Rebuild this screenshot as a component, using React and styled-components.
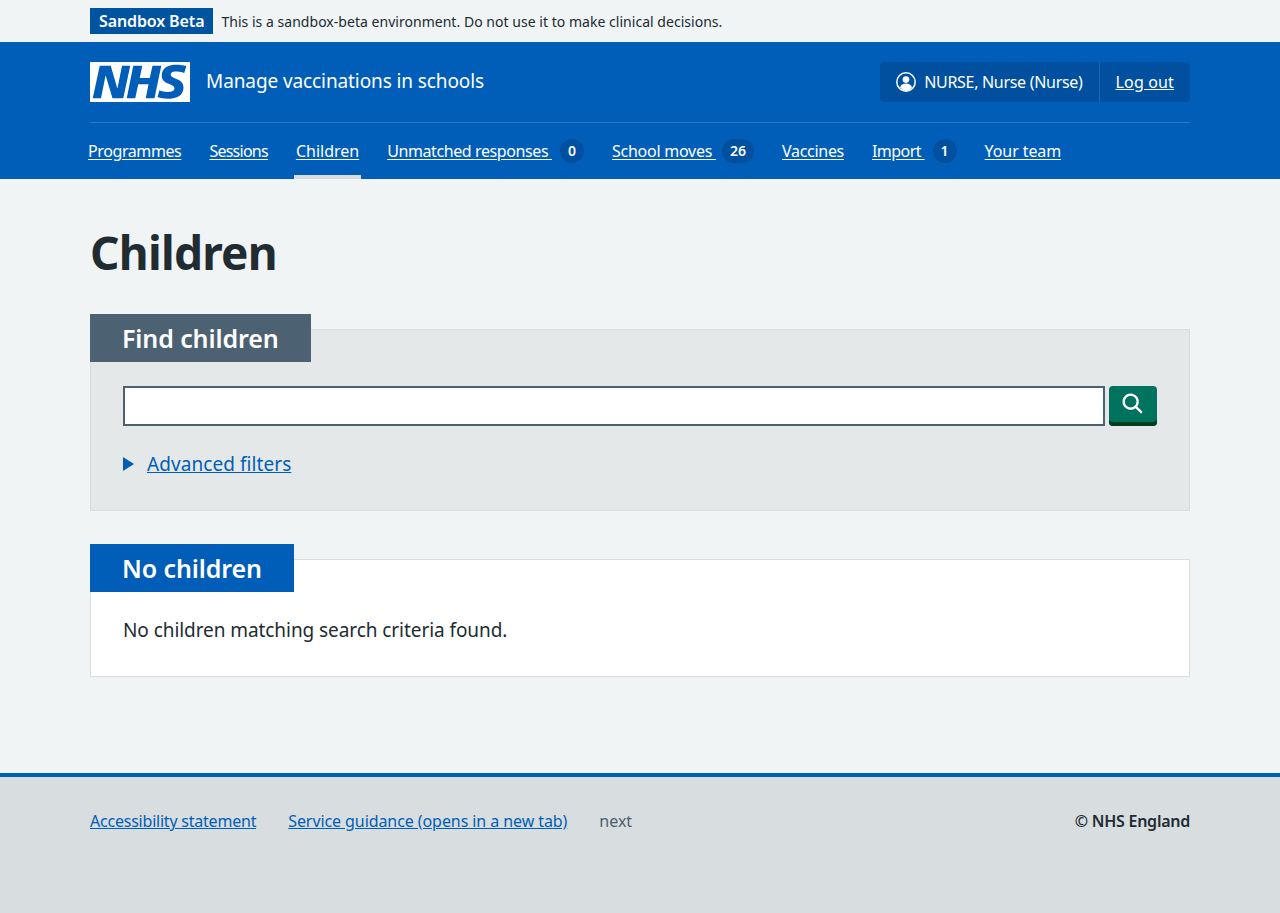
import React from 'react';
import styled, { createGlobalStyle } from 'styled-components';

const GlobalStyle = createGlobalStyle`
  html, body {
    margin: 0;
    padding: 0;
    background: #f0f4f5;
    color: #212b32;
    font-family: "Noto Sans", "Open Sans", Arial, sans-serif;
  }
  * { box-sizing: border-box; }
`;

const Page = styled.div`
  min-height: 913px;
  display: flex;
  flex-direction: column;
`;

const Width = styled.div`
  width: 1100px;
  margin: 0 auto;
`;

const EnvBar = styled.div`
  height: 42px;
  padding-top: 8px;
`;

const EnvRow = styled.div`
  display: flex;
  align-items: flex-start;
  gap: 8px;
`;

const EnvTag = styled.strong`
  background: #00539f;
  color: #fff;
  font-size: 16px;
  font-weight: 600;
  line-height: 26px;
  height: 26px;
  padding: 0 9px;
  letter-spacing: -0.12px;
`;

const EnvText = styled.span`
  font-size: 14px;
  line-height: 26px;
  padding-top: 1px;
  letter-spacing: 0.03px;
`;

const Header = styled.header`
  background: #005eb8;
  height: 137px;
  color: #fff;
`;

const HeaderTop = styled.div`
  display: flex;
  justify-content: space-between;
  align-items: center;
  padding-top: 20px;
  padding-bottom: 20px;
  border-bottom: 1px solid #2b76c4;
  height: 81px;
`;

const Brand = styled.a`
  display: flex;
  align-items: center;
  gap: 16px;
  color: #fff;
  text-decoration: none;
`;

const Logo = styled.svg`
  width: 100px;
  height: 40px;
  display: block;
`;

const ServiceName = styled.span`
  font-size: 19px;
  line-height: 38px;
  height: 40px;
  letter-spacing: -0.1px;
`;

const Account = styled.div`
  display: flex;
  height: 40px;
  background: #00509f;
  border-radius: 4px;
  font-size: 16px;
`;

const AccountItem = styled.div`
  display: flex;
  align-items: center;
  gap: 8px;
  padding: 0 16px;
  letter-spacing: ${({ $spacing }) => $spacing}px;
  & + & {
    border-left: 1px solid #1a66b2;
  }
`;

const AccountLink = styled.a`
  color: #fff;
  text-decoration: underline;
`;

const NavList = styled.nav`
  display: flex;
  gap: 24px;
  margin-left: -4px;
  height: 56px;
`;

const NavItem = styled.a`
  display: flex;
  align-items: center;
  height: 56px;
  padding: 4px 2px 0;
  font-size: 16px;
  color: #fff;
  white-space: pre;
  border-bottom: 4px solid ${({ $active }) => ($active ? '#d8dde0' : 'transparent')};
`;

const NavText = styled.span`
  text-decoration: underline;
  text-underline-offset: 2px;
  letter-spacing: ${({ $spacing }) => $spacing || 0}px;
`;

const Count = styled.span`
  display: inline-block;
  min-width: 24px;
  height: 24px;
  line-height: 24px;
  text-align: center;
  padding: 0 8px;
  margin-left: ${({ $wide }) => ($wide ? '6px' : '8px')};
  border-radius: 12px;
  background: #00509f;
  font-size: 14px;
  font-weight: 600;
`;

const Main = styled.main`
  flex: 1;
  padding-top: 40px;
`;

const Title = styled.h1`
  margin: 0 0 40px;
  font-size: 46px;
  line-height: 67px;
  height: 70px;
  font-weight: 700;
  color: #212b32;
  letter-spacing: -0.75px;
`;

const Panel = styled.section`
  background: ${({ $grey }) => ($grey ? '#e4e8e8' : '#fff')};
  border: 1px solid #d8dde0;
  padding: 0 32px ${({ $grey }) => ($grey ? '33px' : '32px')};
  margin-bottom: ${({ $grey }) => ($grey ? '48px' : '0')};
`;

const PanelHeading = styled.h2`
  display: inline-block;
  margin: -16px 0 24px -33px;
  padding: 0 32px;
  height: 48px;
  line-height: 48px;
  font-size: 25px;
  font-weight: 600;
  color: #fff;
  background: ${({ $grey }) => ($grey ? '#4c6272' : '#005eb8')};
  letter-spacing: -0.1px;
  vertical-align: top;
`;

const SearchRow = styled.form`
  display: flex;
  gap: 4px;
`;

const SearchInput = styled.input`
  flex: 1;
  height: 40px;
  border: 2px solid #4c6272;
  background: #fff;
  border-radius: 0;
  padding: 4px;
`;

const SearchButton = styled.button`
  width: 48px;
  height: 40px;
  padding: 0 0 4px;
  border: 0;
  border-radius: 4px;
  background: #00735f;
  box-shadow: inset 0 -4px 0 #00401e;
  display: flex;
  align-items: center;
  justify-content: center;
`;

const SearchIcon = styled.svg`
  width: 28px;
  height: 28px;
  fill: #fff;
`;

const Filters = styled.div`
  display: flex;
  align-items: center;
  gap: 13px;
  margin-top: 24px;
  height: 27px;
`;

const Arrow = styled.span`
  width: 0;
  height: 0;
  border-left: 11px solid #005eb8;
  border-top: 7px solid transparent;
  border-bottom: 7px solid transparent;
`;

const BlueLink = styled.a`
  color: #005eb8;
  text-decoration: underline;
  font-size: ${({ $size }) => $size || '16px'};
  letter-spacing: ${({ $spacing }) => $spacing}px;
`;

const Body = styled.p`
  margin: 0;
  font-size: 19px;
  line-height: 28px;
  letter-spacing: -0.07px;
`;

const Footer = styled.footer`
  height: 140px;
  background: #d8dde0;
  border-top: 4px solid #005eb8;
  padding-top: 32px;
`;

const FooterRow = styled.div`
  display: flex;
  justify-content: space-between;
  font-size: 16px;
  line-height: 24px;
`;

const FooterLinks = styled.div`
  display: flex;
  gap: 32px;
`;

const Muted = styled.span`
  color: #4c6272;
`;

const Copyright = styled.span`
  font-weight: 600;
  letter-spacing: -0.25px;
`;

const UserIcon = () => (
  <svg width="20" height="20" viewBox="0 0 20 20" aria-hidden="true">
    <circle cx="10" cy="10" r="9.2" fill="none" stroke="#fff" strokeWidth="1.5" />
    <circle cx="10" cy="7.6" r="3.300" fill="#fff" />
    <path d="M4 15.600c.6-2.800 2.900-4.100 6-4.100s5.400 1.300 6 4.100A8.800 8.800 0 0 1 10 19a8.800 8.800 0 0 1-6-3.400z" fill="#fff" />
  </svg>
);

const navItems = [
  { label: 'Programmes', spacing: -0.4 },
  { label: 'Sessions', spacing: -0.75 },
  { label: 'Children', active: true },
  { label: 'Unmatched responses ', count: 0, spacing: -0.4 },
  { label: 'School moves ', count: 26, spacing: -0.25 },
  { label: 'Vaccines', spacing: -0.3 },
  { label: 'Import ', count: 1, spacing: -0.55 },
  { label: 'Your team', spacing: -0.1 },
];

export default function App() {
  return (
    <Page>
      <GlobalStyle />
      <EnvBar>
        <Width>
          <EnvRow>
            <EnvTag>Sandbox Beta</EnvTag>
            <EnvText>This is a sandbox-beta environment. Do not use it to make clinical decisions.</EnvText>
          </EnvRow>
        </Width>
      </EnvBar>
      <Header>
        <Width>
          <HeaderTop>
            <Brand>
              <Logo viewBox="0 0 40 16" aria-label="NHS">
                <path fill="#fff" d="M0 0h40v16H0z" />
                <path
                  fill="#005eb8"
                  d="M3.900 1.500h4.400l2.600 9h.1l1.800-9h3.300l-2.800 13H9l-2.700-9h-.1l-1.800 9H1.100M17.300 1.500h3.600l-1 4.900h4L25 1.500h3.500l-2.700 13h-3.500l1.100-5.600h-4.100l-1.200 5.600h-3.400M37.700 4.400c-.7-.3-1.600-.6-2.900-.6-1.400 0-2.500.2-2.500 1.300 0 1.800 5.100 1.200 5.100 5.100 0 3.600-3.300 4.500-6.400 4.500-1.300 0-2.900-.3-4-.7l.8-2.700c.7.4 2.100.7 3.200.7s2.800-.2 2.800-1.500c0-2.100-5.100-1.300-5.100-5 0-3.400 2.900-4.400 5.800-4.400 1.600 0 3.100.2 4 .6"
                />
              </Logo>
              <ServiceName>Manage vaccinations in schools</ServiceName>
            </Brand>
            <Account>
              <AccountItem $spacing={-0.3}>
                <UserIcon />
                NURSE, Nurse (Nurse)
              </AccountItem>
              <AccountItem $spacing={0.15}>
                <AccountLink>Log out</AccountLink>
              </AccountItem>
            </Account>
          </HeaderTop>
          <NavList>
            {navItems.map((item) => (
              <NavItem key={item.label} $active={item.active}>
                <NavText $spacing={item.spacing}>{item.label}</NavText>
                {item.count !== undefined && <Count $wide={item.count > 9}>{item.count}</Count>}
              </NavItem>
            ))}
          </NavList>
        </Width>
      </Header>
      <Main>
        <Width>
          <Title>Children</Title>
          <Panel $grey>
            <PanelHeading $grey>Find children</PanelHeading>
            <SearchRow>
              <SearchInput aria-label="Search" />
              <SearchButton type="button" aria-label="Search">
                <SearchIcon viewBox="0 0 24 24">
                  <path d="M19.710 18.290l-4.110-4.100a7 7 0 1 0-1.410 1.410l4.100 4.110a1 1 0 0 0 1.420 0 1 1 0 0 0 0-1.420zM5 10a5 5 0 1 1 5 5 5 5 0 0 1-5-5z" />
                </SearchIcon>
              </SearchButton>
            </SearchRow>
            <Filters>
              <Arrow />
              <BlueLink $size="19px" $spacing={0.07}>Advanced filters</BlueLink>
            </Filters>
          </Panel>
          <Panel>
            <PanelHeading>No children</PanelHeading>
            <Body>No children matching search criteria found.</Body>
          </Panel>
        </Width>
      </Main>
      <Footer>
        <Width>
          <FooterRow>
            <FooterLinks>
              <BlueLink $spacing={-0.22}>Accessibility statement</BlueLink>
              <BlueLink $spacing={-0.08}>Service guidance (opens in a new tab)</BlueLink>
              <Muted>next</Muted>
            </FooterLinks>
            <Copyright>© NHS England</Copyright>
          </FooterRow>
        </Width>
      </Footer>
    </Page>
  );
}
